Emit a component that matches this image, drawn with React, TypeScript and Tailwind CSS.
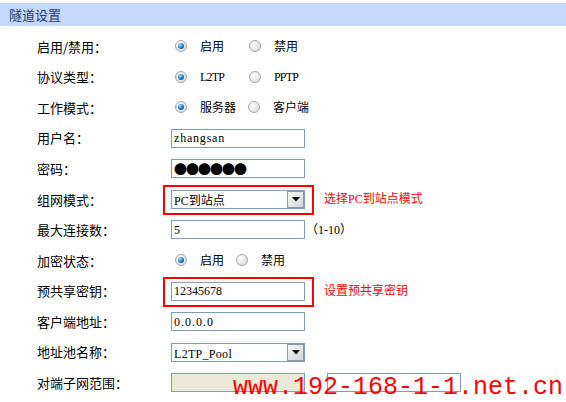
import React from "react";

const cjk = "font-['Noto_Sans_CJK_SC',sans-serif]";
const mixed = "font-['Liberation_Serif','Noto_Sans_CJK_SC',serif]";
const latin = `${mixed} text-[12px]`;

function Radio({ checked }: { checked?: boolean }) {
  return (
    <span className="flex size-[12px] shrink-0 items-center justify-center rounded-full border border-[#a3a7ab] bg-[radial-gradient(circle_at_35%_35%,#ffffff,#d2d4d6)]">
      {checked && (
        <span className="size-[6px] rounded-full bg-[radial-gradient(circle_at_35%_30%,#9fe0ff,#1479c6_55%,#0b3f7a)]" />
      )}
    </span>
  );
}

function RadioGroup({
  options,
  isLatin,
  fixed,
}: {
  options: string[];
  isLatin?: boolean;
  fixed?: boolean;
}) {
  return (
    <div className="flex items-center pl-[4px]">
      {options.map((opt, i) => (
        <div
          key={opt}
          className={`flex items-center gap-[13px] ${fixed && i === 0 ? "w-[74px]" : ""} ${!fixed && i === 0 ? "mr-[12px]" : ""}`}
        >
          <Radio checked={i === 0} />
          <span className={isLatin ? `${latin} tracking-[-0.8px]` : `${cjk} text-[12px]`}>{opt}</span>
        </div>
      ))}
    </div>
  );
}

function TextBox({ value, disabled, className }: { value?: React.ReactNode; disabled?: boolean; className?: string }) {
  return (
    <div
      className={`flex h-[19px] w-[134px] items-center border border-[#7f9db9] pl-[2px] text-black ${disabled ? "bg-[#ece9d8]" : "bg-white"} ${className ?? ""}`}
    >
      {value}
    </div>
  );
}

function Select({ value }: { value: React.ReactNode }) {
  return (
    <div className="flex h-[19px] w-[134px] items-center border border-[#7f9db9] bg-white">
      <div className="flex-1 pl-[2px]">{value}</div>
      <div className="flex h-[17px] w-[17px] items-center justify-center border border-[#8d98a4] bg-[linear-gradient(135deg,#f7f7f7,#d6d6d6)]">
        <svg width="8" height="5" viewBox="0 0 8 5">
          <path d="M0 0h8L4 4.5z" fill="#000" />
        </svg>
      </div>
    </div>
  );
}

function Annotated({ children, note }: { children: React.ReactNode; note: string }) {
  return (
    <div className="flex items-center">
      <div className="relative">
        {children}
        <div className="absolute -bottom-[6px] -left-[8px] -right-[9px] -top-[5px] border-2 border-[#f00]" />
      </div>
      <span className={`${mixed} ml-[19px] text-[12px] text-[#f00]`}>{note}</span>
    </div>
  );
}

function Row({ label, children }: { label: string; children: React.ReactNode }) {
  return (
    <div className="flex h-[30.6px] items-center">
      <div className={`${cjk} w-[171px] shrink-0 pl-[37px] text-[13px] text-black`}>{label}</div>
      {children}
    </div>
  );
}

export default function App() {
  return (
    <div className="relative h-[402px] w-[566px] overflow-hidden bg-white pt-[3px]">
      <div className={`${cjk} flex h-[23px] items-center bg-[#c5d9fd] pl-[9px] text-[13px] text-[#1d3a6c]`}>
        隧道设置
      </div>

      <div className="mt-[5px]">
        <Row label="启用/禁用：">
          <RadioGroup options={["启用", "禁用"]} fixed />
        </Row>
        <Row label="协议类型：">
          <RadioGroup options={["L2TP", "PPTP"]} isLatin fixed />
        </Row>
        <Row label="工作模式：">
          <RadioGroup options={["服务器", "客户端"]} />
        </Row>
        <Row label="用户名：">
          <TextBox value={<span className={`${latin} tracking-[0.8px]`}>zhangsan</span>} />
        </Row>
        <Row label="密码：">
          <TextBox
            value={<span className={`${cjk} text-[13px] leading-none tracking-[-1px]`}>●●●●●●</span>}
          />
        </Row>
        <Row label="组网模式：">
          <Annotated note="选择PC到站点模式">
            <Select value={<span className={`${mixed} text-[12px]`}>PC到站点</span>} />
          </Annotated>
        </Row>
        <Row label="最大连接数：">
          <TextBox value={<span className={latin}>5</span>} />
          <span className={`${mixed} ml-[1px] text-[12px]`}>（1-10）</span>
        </Row>
        <Row label="加密状态：">
          <RadioGroup options={["启用", "禁用"]} />
        </Row>
        <Row label="预共享密钥：">
          <Annotated note="设置预共享密钥">
            <TextBox value={<span className={latin}>12345678</span>} />
          </Annotated>
        </Row>
        <Row label="客户端地址：">
          <TextBox value={<span className={`${latin} tracking-[1px]`}>0.0.0.0</span>} />
        </Row>
        <Row label="地址池名称：">
          <Select value={<span className={`${latin} tracking-[0.3px]`}>L2TP_Pool</span>} />
        </Row>
        <Row label="对端子网范围：">
          <TextBox disabled />
          <TextBox className="ml-[22px] w-[24px]" />
        </Row>
      </div>

      {/* watermark over the page */}
      <div className="absolute left-[233px] top-[375px] font-['Liberation_Mono',monospace] text-[25px] leading-[25px] text-[#f00]">
        www.192-168-1-1.net.cn
      </div>
    </div>
  );
}
